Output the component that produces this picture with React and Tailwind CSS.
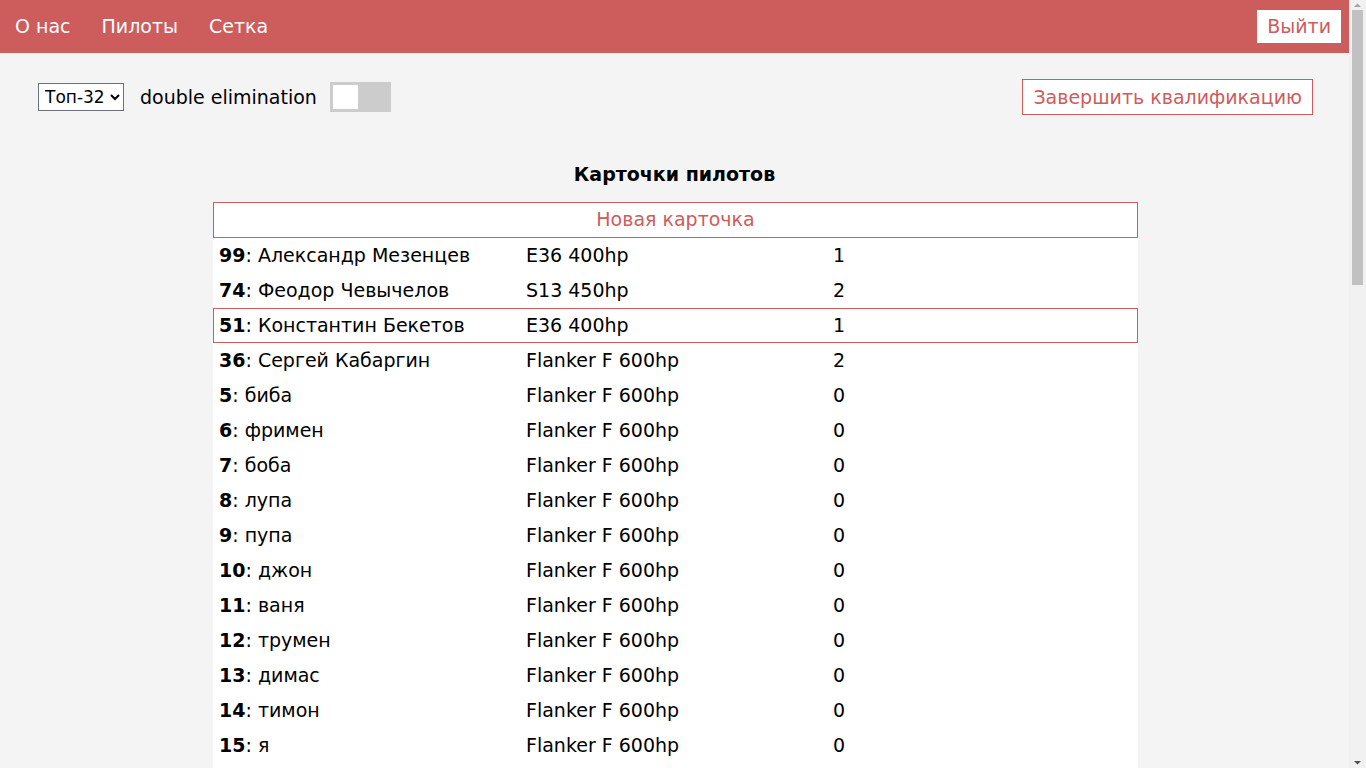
import { useState } from 'react'

const pilots = [
  { num: 99, name: 'Александр Мезенцев', car: 'E36 400hp', score: 1 },
  { num: 74, name: 'Феодор Чевычелов', car: 'S13 450hp', score: 2 },
  { num: 51, name: 'Константин Бекетов', car: 'E36 400hp', score: 1, selected: true },
  { num: 36, name: 'Сергей Кабаргин', car: 'Flanker F 600hp', score: 2 },
  { num: 5, name: 'биба', car: 'Flanker F 600hp', score: 0 },
  { num: 6, name: 'фримен', car: 'Flanker F 600hp', score: 0 },
  { num: 7, name: 'боба', car: 'Flanker F 600hp', score: 0 },
  { num: 8, name: 'лупа', car: 'Flanker F 600hp', score: 0 },
  { num: 9, name: 'пупа', car: 'Flanker F 600hp', score: 0 },
  { num: 10, name: 'джон', car: 'Flanker F 600hp', score: 0 },
  { num: 11, name: 'ваня', car: 'Flanker F 600hp', score: 0 },
  { num: 12, name: 'трумен', car: 'Flanker F 600hp', score: 0 },
  { num: 13, name: 'димас', car: 'Flanker F 600hp', score: 0 },
  { num: 14, name: 'тимон', car: 'Flanker F 600hp', score: 0 },
  { num: 15, name: 'я', car: 'Flanker F 600hp', score: 0 },
  { num: 16, name: 'ты', car: 'Flanker F 600hp', score: 0 },
  { num: 17, name: 'он', car: 'Flanker F 600hp', score: 0 },
]

const rowSelected = 'grid grid-cols-[307px_307px_1fr] items-center h-[35px] pl-[5px] text-[19px] border border-[#cd5c5c]'
const rowNormal = 'grid grid-cols-[307px_307px_1fr] items-center h-[35px] pl-[5px] text-[19px] border border-white'

const App = () => {
  const [top, setTop] = useState('32')
  const [double, setDouble] = useState(false)

  return (
    <div className="h-screen flex overflow-hidden bg-[#f4f4f4] text-black font-['DejaVu_Sans',sans-serif]">
      <div className="flex-1 overflow-hidden">
        {/* Header */}
        <header className="h-[53px] bg-[#cd5c5c] flex items-center justify-between pl-[15px] pr-[8px]">
          <nav className="flex gap-[31px] text-[19px] text-white">
            <a href="#">О нас</a>
            <a href="#">Пилоты</a>
            <a href="#">Сетка</a>
          </nav>
          <button className="h-[33px] px-[10px] bg-white text-[#cd5c5c] text-[19px]">Выйти</button>
        </header>

        {/* Controls */}
        <div className="flex items-center justify-between pl-[38px] pr-[36px] pt-[26px]">
          <div className="flex items-center">
            <select
              value={top}
              onChange={(e) => setTop(e.target.value)}
              className="h-[28px] w-[86px] border border-gray-500 bg-white text-[17px] px-[2px]"
            >
              <option value="8">Топ-8</option>
              <option value="16">Топ-16</option>
              <option value="32">Топ-32</option>
            </select>
            <span className="ml-[16px] mr-[13px] text-[19px]">double elimination</span>
            <button
              onClick={() => setDouble(!double)}
              className={double ? 'w-[61px] h-[30px] bg-[#cccccc] p-[3px] flex justify-end' : 'w-[61px] h-[30px] bg-[#cccccc] p-[3px] flex justify-start'}
            >
              <span className="w-[25px] h-[24px] bg-white" />
            </button>
          </div>
          <button className="h-[36px] px-[10px] bg-white border border-[#cd5c5c] text-[#cd5c5c] text-[19px]">
            Завершить квалификацию
          </button>
        </div>

        {/* Cards */}
        <h2 className="mt-[45px] text-center font-bold text-[19px]">Карточки пилотов</h2>
        <div className="flex justify-center pl-[2px] mt-[13px]">
          <div className="w-[925px] bg-white">
            <button className="w-full h-[36px] border border-[#cd5c5c] text-[#cd5c5c] text-[19px]">Новая карточка</button>
            {pilots.map(p => (
              <div key={p.num} className={p.selected ? rowSelected : rowNormal}>
                <div><span className="font-bold">{p.num}</span>: {p.name}</div>
                <div>{p.car}</div>
                <div>{p.score}</div>
              </div>
            ))}
          </div>
        </div>
      </div>

      {/* Scrollbar */}
      <div className="w-[17px] h-full bg-[#f1f1f1] flex flex-col items-center">
        <svg width="17" height="10" viewBox="0 0 17 10" className="shrink-0">
          <path d="M5 7 L8.5 3.5 L12 7 Z" fill="#a3a3a3" />
        </svg>
        <div className="w-[11px] h-[275px] bg-[#c1c1c1]" />
        <div className="flex-1" />
        <svg width="17" height="10" viewBox="0 0 17 10" className="shrink-0">
          <path d="M5 3 L8.5 6.5 L12 3 Z" fill="#505050" />
        </svg>
      </div>
    </div>
  )
}

export default App
